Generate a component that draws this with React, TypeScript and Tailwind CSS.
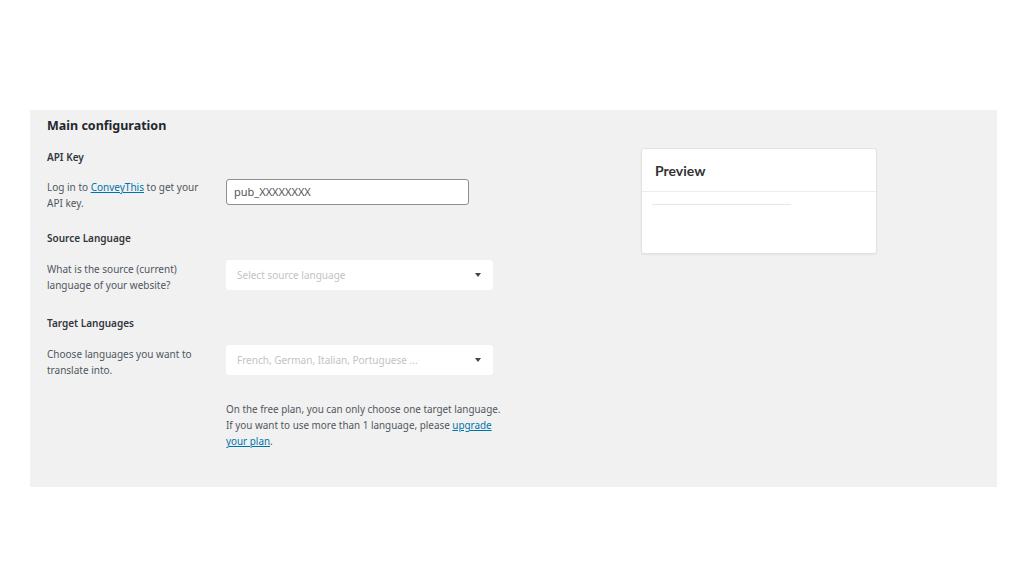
export default function App() {
  return (
    <div className="w-[1024px] h-[576px] bg-white pt-[110px] pl-[30px] font-['Noto_Sans',sans-serif] text-[#50575e]">
      <div className="w-[967px] h-[377px] bg-[#f1f1f1] pl-[17px] pt-[5px] flex">
        {/* Form */}
        <div className="w-[480px]">
          <h2 className="text-[12.5px] font-bold text-[#23282d] leading-[20px] mt-[1px]">Main configuration</h2>

          <h3 className="text-[10px] font-semibold text-[#32373c] mt-[13px] leading-[16px]">API Key</h3>
          <div className="flex mt-[14px]">
            <p className="w-[179px] text-[10px] leading-[16px]">
              Log in to <a className="text-[#0073aa] underline">ConveyThis</a> to get your<br />API key.
            </p>
            <div className="w-[243px] h-[26px] bg-white border border-[#8c8f94] rounded-[3px] px-[7px] flex items-center text-[11px] text-[#555]">
              pub_XXXXXXXX
            </div>
          </div>

          <h3 className="text-[10px] font-semibold text-[#32373c] mt-[19px] leading-[16px]">Source Language</h3>
          <div className="flex mt-[14px]">
            <p className="w-[179px] text-[10px] leading-[16px] pt-[1px]">
              What is the source (current)<br />language of your website?
            </p>
            <div className="w-[267px] h-[30px] bg-white rounded-[3px] px-[11px] flex items-center justify-between text-[10px] text-[#c3c3c3]">
              <span>Select source language</span>
              <span className="w-0 h-0 border-l-[3px] border-r-[3px] border-t-[4px] border-l-transparent border-r-transparent border-t-[#444] mr-[1px]" />
            </div>
          </div>

          <h3 className="text-[10px] font-semibold text-[#32373c] mt-[22px] leading-[16px]">Target Languages</h3>
          <div className="flex mt-[14px]">
            <p className="w-[179px] text-[10px] leading-[16px] pt-[1px]">
              Choose languages you want to<br />translate into.
            </p>
            <div className="w-[267px] h-[30px] bg-white rounded-[3px] px-[11px] flex items-center justify-between text-[10px] text-[#c3c3c3]">
              <span>French, German, Italian, Portuguese ...</span>
              <span className="w-0 h-0 border-l-[3px] border-r-[3px] border-t-[4px] border-l-transparent border-r-transparent border-t-[#444] mr-[1px]" />
            </div>
          </div>

          <p className="ml-[179px] mt-[23px] w-[300px] text-[9.9px] leading-[16px] whitespace-nowrap">
            On the free plan, you can only choose one target language.<br />
            If you want to use more than 1 language, please{' '}
            <a className="text-[#0073aa] underline">upgrade</a>
            <br />
            <a className="text-[#0073aa] underline">your plan</a>.
          </p>
        </div>

        {/* Preview */}
        <div className="ml-[114px] mt-[33px] w-[236px] h-[106px] bg-white rounded-[3px] border border-[#e2e2e2] shadow-[0_1px_2px_rgba(0,0,0,0.06)]">
          <div className="h-[43px] border-b border-[#ececec] px-[13px] flex items-center">
            <span className="font-['Lato',sans-serif] font-bold text-[14px] text-[#333]">Preview</span>
          </div>
          <div className="mx-[10px] mt-[12px] w-[139px] h-px bg-[#e6e6e6]" />
        </div>
      </div>
    </div>
  );
}
